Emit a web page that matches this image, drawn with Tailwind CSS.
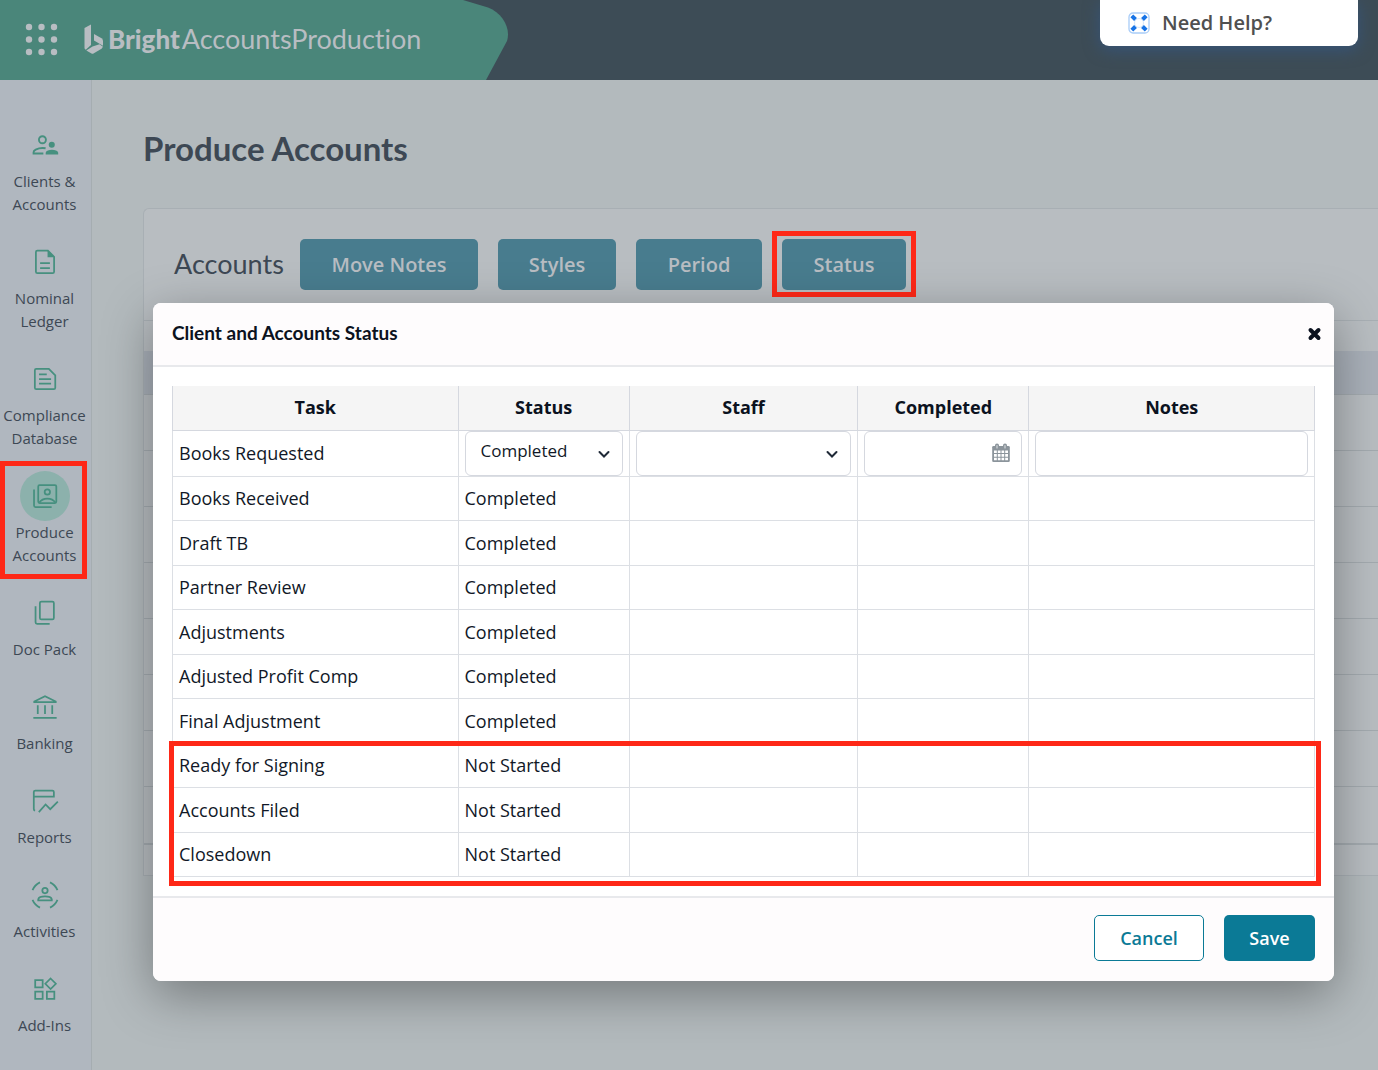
<!DOCTYPE html>
<html lang="en">
<head>
	<meta charset="UTF-8">
	<meta name="viewport" content="width=device-width, initial-scale=1.0">
	<title>Bright AccountsProduction - Produce Accounts</title>
	<script src="https://cdn.jsdelivr.net/npm/@tailwindcss/browser@4"></script>
</head>
<body class="relative min-h-screen flex flex-col overflow-hidden bg-[#b3babd] font-['Open_Sans','Noto_Sans',sans-serif] text-[#3d4854]">

<header class="relative h-20 shrink-0 flex items-center bg-[#3d4c56]">
	<svg class="absolute left-0 top-0" width="510" height="80" viewBox="0 0 510 80" fill="#4a867a">
		<path d="M0 0H463L488 7.500C503 13 511 29 507 41L486 80H0Z"/>
	</svg>
	<div class="relative flex items-center pl-[25px] pb-0.5">
		<button type="button" aria-label="Apps">
			<svg width="33" height="33" viewBox="0 0 33 33" fill="#b8bdc2">
				<circle cx="4" cy="4" r="3.200"/><circle cx="16.500" cy="4" r="3.200"/><circle cx="29" cy="4" r="3.200"/>
				<circle cx="4" cy="16.500" r="3.200"/><circle cx="16.500" cy="16.500" r="3.200"/><circle cx="29" cy="16.500" r="3.200"/>
				<circle cx="4" cy="29" r="3.200"/><circle cx="16.500" cy="29" r="3.200"/><circle cx="29" cy="29" r="3.200"/>
			</svg>
		</button>
		<a href="#" class="ml-[26px] flex items-center font-[Lato,sans-serif] text-[26px] leading-8 text-[#b8bdc2] [font-variant-ligatures:none]">
			<svg class="mr-1" width="20" height="30" viewBox="0 0 20 30" fill="#b8bdc2">
				<path d="M.5 4L7 .5V21L1.800 25.800Q.5 25.300 .5 24Z"/>
				<path d="M10 10L17.500 14.300Q19 15.300 19 17V21.800L15.500 19.800L10 16.500Z"/>
				<path d="M2.300 26.600L8.500 22.600L15.500 20.200L19 22.800L17.500 24.800L9.500 29.500Q8.500 30 7.500 29.500Z"/>
			</svg>
			<span class="font-black">Bright</span><span class="ml-0.5 text-[27px]">AccountsProduction</span>
		</a>
	</div>
	<button type="button" class="absolute right-5 top-0 w-[258px] h-[46px] pl-7 flex items-center gap-3 rounded-b-[9px] bg-white text-xl font-semibold text-[#505050] shadow-[0_4px_16px_#365478]">
		<svg width="22" height="22" viewBox="0 0 22 22" fill="none">
			<rect x="1" y="1" width="20" height="20" rx="4" stroke="#a9cdf8" stroke-width="1.300"/>
			<circle cx="11" cy="11" r="4.500" stroke="#d5e7fc"/>
			<path d="M3.800 3.800L7.500 7.500M18.200 3.800L14.500 7.500M3.800 18.200L7.500 14.500M18.200 18.200L14.500 14.500" stroke="#1673e6" stroke-width="4"/>
		</svg>
		Need Help?
	</button>
</header>

<div class="flex grow">
	<nav class="w-[92px] shrink-0 flex flex-col gap-[21px] pt-10 pr-0.5 border-r border-[#a5adb1] bg-[#b0b7bf] text-center text-[15px] leading-[23px]">
		<a href="#" class="flex flex-col items-center">
			<span class="size-[50px] flex items-center justify-center">
				<svg width="28" height="28" viewBox="0 0 24 24" fill="none" stroke="#46907f" stroke-width="1.600">
					<circle cx="9.800" cy="7.500" r="3"/>
					<circle cx="17.800" cy="11.800" r="2.600" fill="#46907f" stroke="none"/>
					<path d="M12.500 14.800Q8 14 4 15.900Q2.200 16.800 2.200 18.300V19.300H10.600"/>
					<path d="M12.600 20.100V18.600C13.400 15.300 22.500 15.300 23.300 18.600V20.100Z" fill="#46907f" stroke="none"/>
				</svg>
			</span>
			<span>Clients &amp;<br>Accounts</span>
		</a>
		<a href="#" class="flex flex-col items-center">
			<span class="size-[50px] flex items-center justify-center">
				<svg width="28" height="28" viewBox="0 0 24 24" fill="none" stroke="#46907f" stroke-width="1.500">
					<path d="M5.500 2.200H14.500L19.800 7.500V20.300Q19.800 21.600 18.500 21.600H5.500Q4.200 21.600 4.200 20.300V3.500Q4.200 2.200 5.500 2.200Z"/>
					<path d="M14.200 2V8H20Z" fill="#46907f" stroke="none"/>
					<path d="M7.800 13H16.200M7.800 17.200H16.200"/>
				</svg>
			</span>
			<span>Nominal<br>Ledger</span>
		</a>
		<a href="#" class="flex flex-col items-center">
			<span class="size-[50px] flex items-center justify-center">
				<svg width="28" height="28" viewBox="0 0 24 24" fill="none" stroke="#46907f" stroke-width="1.500">
					<path d="M4.500 3.300H15.300L20.800 8.800V19.500Q20.800 20.700 19.600 20.700H4.500Q3.300 20.700 3.300 19.500V4.500Q3.300 3.300 4.500 3.300Z"/>
					<path d="M6.900 8H13.500M6.900 12H17.200M6.900 16H17.200"/>
				</svg>
			</span>
			<span>Compliance<br>Database</span>
		</a>
		<a href="#" class="relative flex flex-col items-center">
			<span class="size-[50px] flex items-center justify-center rounded-full bg-[#8cb1ac]">
				<svg width="28" height="28" viewBox="0 0 24 24" fill="none" stroke="#46907f" stroke-width="1.500">
					<rect x="6.200" y="2.700" width="15.500" height="15.300" rx="1.200"/>
					<circle cx="14" cy="8.600" r="2.300"/>
					<path d="M7.200 17.600C10 13 18 13 20.800 17.600"/>
					<path d="M2.600 6.500V20.200Q2.600 21.500 3.900 21.500H17.700"/>
				</svg>
			</span>
			<span>Produce<br>Accounts</span>
			<span class="absolute left-0 right-0.5 -top-2.5 -bottom-3 border-5 border-[#fe2817]"></span>
		</a>
		<a href="#" class="flex flex-col items-center">
			<span class="size-[50px] flex items-center justify-center">
				<svg width="28" height="28" viewBox="0 0 24 24" fill="none" stroke="#46907f" stroke-width="1.500">
					<rect x="7.600" y="2.200" width="12" height="15.300" rx="1.300"/>
					<path d="M3.900 6.200V20Q3.900 21.300 5.200 21.300H16"/>
				</svg>
			</span>
			<span>Doc Pack</span>
		</a>
		<a href="#" class="flex flex-col items-center">
			<span class="size-[50px] flex items-center justify-center">
				<svg width="28" height="28" viewBox="0 0 24 24" fill="none" stroke="#46907f" stroke-width="1.500">
					<path d="M2.800 7.900V7.300L12 2.700L21.200 7.300V7.900Z"/>
					<path d="M5.800 10.500V18M12 10.500V18M18.200 10.500V18M2 21.300H22"/>
				</svg>
			</span>
			<span>Banking</span>
		</a>
		<a href="#" class="flex flex-col items-center">
			<span class="size-[50px] flex items-center justify-center">
				<svg width="28" height="28" viewBox="0 0 24 24" fill="none" stroke="#46907f" stroke-width="1.500">
					<path d="M3.500 20.300Q2.400 20 2.400 18.800V4.300Q2.400 3 3.700 3H18.300Q19.600 3 19.600 4.300V8.300H2.400"/>
					<path d="M6.700 21.500L12.500 15L16.500 19L23 12.500"/>
				</svg>
			</span>
			<span>Reports</span>
		</a>
		<a href="#" class="flex flex-col items-center">
			<span class="size-[50px] flex items-center justify-center">
				<svg width="28" height="28" viewBox="0 0 24 24" fill="none" stroke="#46907f" stroke-width="1.500">
					<circle cx="12" cy="8.200" r="2.300"/>
					<path d="M6.200 16.500V15.600C7.200 12.500 16.800 12.500 17.800 15.600V16.500Z"/>
					<path d="M1.300 7.800Q3.300 3.200 7.700 1.200M16.300 1.200Q20.700 3.200 22.700 7.800M1.300 16.200Q3.300 20.800 7.700 22.800M16.300 22.800Q20.700 20.800 22.700 16.200"/>
				</svg>
			</span>
			<span>Activities</span>
		</a>
		<a href="#" class="flex flex-col items-center">
			<span class="size-[50px] flex items-center justify-center">
				<svg width="28" height="28" viewBox="0 0 24 24" fill="none" stroke="#46907f" stroke-width="1.500">
					<path d="M3.600 4.300H10V10.600H3.600ZM3.600 14.200H10V20.500H3.600ZM13.600 14.200H20V20.500H13.600Z"/>
					<path d="M16.800 3L21.300 7.500L16.800 12L12.300 7.500Z"/>
				</svg>
			</span>
			<span>Add-Ins</span>
		</a>
	</nav>

	<main class="grow pl-[51px] pt-12">
		<h1 class="font-[Lato,sans-serif] text-[33px] leading-10 font-bold">Produce Accounts</h1>
		<section class="mt-10 h-[668px] rounded-tl-md border border-r-0 border-[#a8afb4] bg-[#b8bdc1]">
			<div class="h-28 pl-[30px] flex items-center border-b border-[#a8afb4]">
				<h2 class="w-[126px] font-[Lato,sans-serif] text-[27px]">Accounts</h2>
				<div class="flex gap-5 text-xl font-semibold text-[#b8bdc2]">
					<button type="button" class="h-[51px] w-[178px] rounded-[5px] bg-[#487c8e]">Move Notes</button>
					<button type="button" class="h-[51px] w-[118px] rounded-[5px] bg-[#487c8e]">Styles</button>
					<button type="button" class="h-[51px] w-[126px] rounded-[5px] bg-[#487c8e]">Period</button>
					<div class="relative">
						<button type="button" class="h-[51px] w-[124px] rounded-[5px] bg-[#487c8e]">Status</button>
						<span class="absolute -left-2.5 -right-2.5 -top-2 -bottom-[7px] border-5 border-[#fe2817]"></span>
					</div>
				</div>
			</div>
			<!-- rows behind the dialog -->
			<div class="mt-[30px] divide-y divide-[#a3aaaf] border-b-2 border-[#a3aaaf]">
				<div class="h-11 bg-[#a9b0b9]"></div>
				<div class="h-14"></div>
				<div class="h-14"></div>
				<div class="h-14"></div>
				<div class="h-14"></div>
				<div class="h-14"></div>
				<div class="h-14"></div>
				<div class="h-14"></div>
				<div class="h-14"></div>
			</div>
		</section>
	</main>
</div>

<div role="dialog" aria-labelledby="dialog-title" class="absolute left-[153px] right-11 top-[303px] rounded-lg bg-white text-lg text-[#111827] shadow-[0_14px_50px_rgba(0,0,0,0.35)]">
	<div class="h-16 pl-[19px] pr-3 flex items-center justify-between rounded-t-lg border-b-2 border-[#e8e9ec] bg-[#fefcfd]">
		<h3 id="dialog-title" class="pb-0.5 font-[Lato,sans-serif] text-[19px] font-bold text-[#0b1220]">Client and Accounts Status</h3>
		<button type="button" aria-label="Close">
			<svg width="15" height="14" viewBox="0 0 14 14" fill="none" stroke="#0b1220" stroke-width="4" stroke-linecap="round">
				<path d="M3 3L11 11M11 3L3 11"/>
			</svg>
		</button>
	</div>

	<div class="relative px-[19px] py-[19px]">
		<table class="w-full table-fixed border-collapse border-x border-[#dcdfe4]">
			<thead>
				<tr class="h-11 bg-[#f5f5f5] text-[#0b1220]">
					<th class="w-1/4 pb-0.5 border border-t-0 border-[#d5d8df]">Task</th>
					<th class="w-[15%] pb-0.5 border border-t-0 border-[#d5d8df]">Status</th>
					<th class="w-1/5 pb-0.5 border border-t-0 border-[#d5d8df]">Staff</th>
					<th class="w-[15%] pb-0.5 border border-t-0 border-[#d5d8df]">Completed</th>
					<th class="w-1/4 pb-0.5 border border-t-0 border-[#d5d8df]">Notes</th>
				</tr>
			</thead>
			<tbody id="tasks">
				<tr class="h-[46px]">
					<td class="px-1.5 border border-[#dcdfe4]">Books Requested</td>
					<td class="px-1.5 border border-[#dcdfe4]">
						<div class="relative">
							<select aria-label="Status" class="block w-full h-[45px] pl-[15px] pb-1 appearance-none rounded-md border border-[#d5d8df] bg-white text-[17px]">
								<option>Completed</option>
								<option>Not Started</option>
							</select>
							<svg class="absolute right-3 top-4 pointer-events-none" width="14" height="14" viewBox="0 0 14 14" fill="none" stroke="#1f2937" stroke-width="2" stroke-linecap="round"><path d="M2.500 5L7 9.500L11.500 5"/></svg>
						</div>
					</td>
					<td class="px-1.5 border border-[#dcdfe4]">
						<div class="relative">
							<select aria-label="Staff" class="block w-full h-[45px] pl-[15px] appearance-none rounded-md border border-[#d5d8df] bg-white text-[17px]">
								<option></option>
							</select>
							<svg class="absolute right-3 top-4 pointer-events-none" width="14" height="14" viewBox="0 0 14 14" fill="none" stroke="#1f2937" stroke-width="2" stroke-linecap="round"><path d="M2.500 5L7 9.500L11.500 5"/></svg>
						</div>
					</td>
					<td class="px-1.5 border border-[#dcdfe4]">
						<div class="relative">
							<input type="text" aria-label="Completed" class="block w-full h-[45px] pl-[15px] pr-10 rounded-md border border-[#d5d8df] bg-white text-[17px]">
							<button type="button" aria-label="Pick a date" class="absolute right-3 top-3">
								<svg width="18" height="20" viewBox="0 0 18 20">
									<path d="M1.500 3H16.500Q17.800 3 17.800 4.300V17.700Q17.800 19 16.500 19H1.500Q.2 19 .2 17.700V4.300Q.2 3 1.500 3Z" fill="#8b949b"/>
									<path d="M2 7.500H4.800V10H2ZM5.800 7.500H8.500V10H5.800ZM9.500 7.500H12.200V10H9.500ZM13.200 7.500H16V10H13.200ZM2 11H4.800V13.700H2ZM5.800 11H8.500V13.700H5.800ZM9.500 11H12.200V13.700H9.500ZM13.200 11H16V13.700H13.200ZM2 14.700H4.800V17.300H2ZM5.800 14.700H8.500V17.300H5.800ZM9.500 14.700H12.200V17.300H9.500ZM13.200 14.700H16V17.300H13.200Z" fill="#fff"/>
									<path d="M5 2.500V5M13 2.500V5" stroke="#8b949b" stroke-width="4" stroke-linecap="round"/>
									<path d="M5 2.500V5M13 2.500V5" stroke="#d3d7da" stroke-width="1.200" stroke-linecap="round"/>
								</svg>
							</button>
						</div>
					</td>
					<td class="px-1.5 border border-[#dcdfe4]">
						<input type="text" aria-label="Notes" class="block w-full h-[45px] px-[15px] rounded-md border border-[#d5d8df] bg-white text-[17px]">
					</td>
				</tr>
			</tbody>
		</table>
		<span class="absolute left-4 right-[13px] bottom-2.5 h-[145px] border-5 border-[#fe2817] pointer-events-none"></span>
	</div>

	<div class="h-[85px] pr-[19px] pb-0.5 flex items-center justify-end gap-5 rounded-b-lg border-t-2 border-[#e8e9ec] bg-[#fefcfd] font-semibold">
		<button type="button" class="w-[110px] h-[46px] rounded-[5px] border border-[#0b7a96] bg-white text-[#0b7a96]">Cancel</button>
		<button type="button" class="w-[91px] h-[46px] rounded-[5px] bg-[#0b7a96] text-white">Save</button>
	</div>
</div>

<script>
	const tasks = [
		["Books Received", "Completed"],
		["Draft TB", "Completed"],
		["Partner Review", "Completed"],
		["Adjustments", "Completed"],
		["Adjusted Profit Comp", "Completed"],
		["Final Adjustment", "Completed"],
		["Ready for Signing", "Not Started"],
		["Accounts Filed", "Not Started"],
		["Closedown", "Not Started"]
	];

	const body = document.getElementById("tasks");
	tasks.forEach(function(task) {
		const row = document.createElement("tr");
		row.className = "odd:h-[45px] even:h-11";
		[task[0], task[1], "", "", ""].forEach(function(text) {
			const cell = document.createElement("td");
			cell.className = "px-1.5 border border-[#dcdfe4]";
			cell.textContent = text;
			row.appendChild(cell);
		});
		body.appendChild(row);
	});
</script>

</body>
</html>
